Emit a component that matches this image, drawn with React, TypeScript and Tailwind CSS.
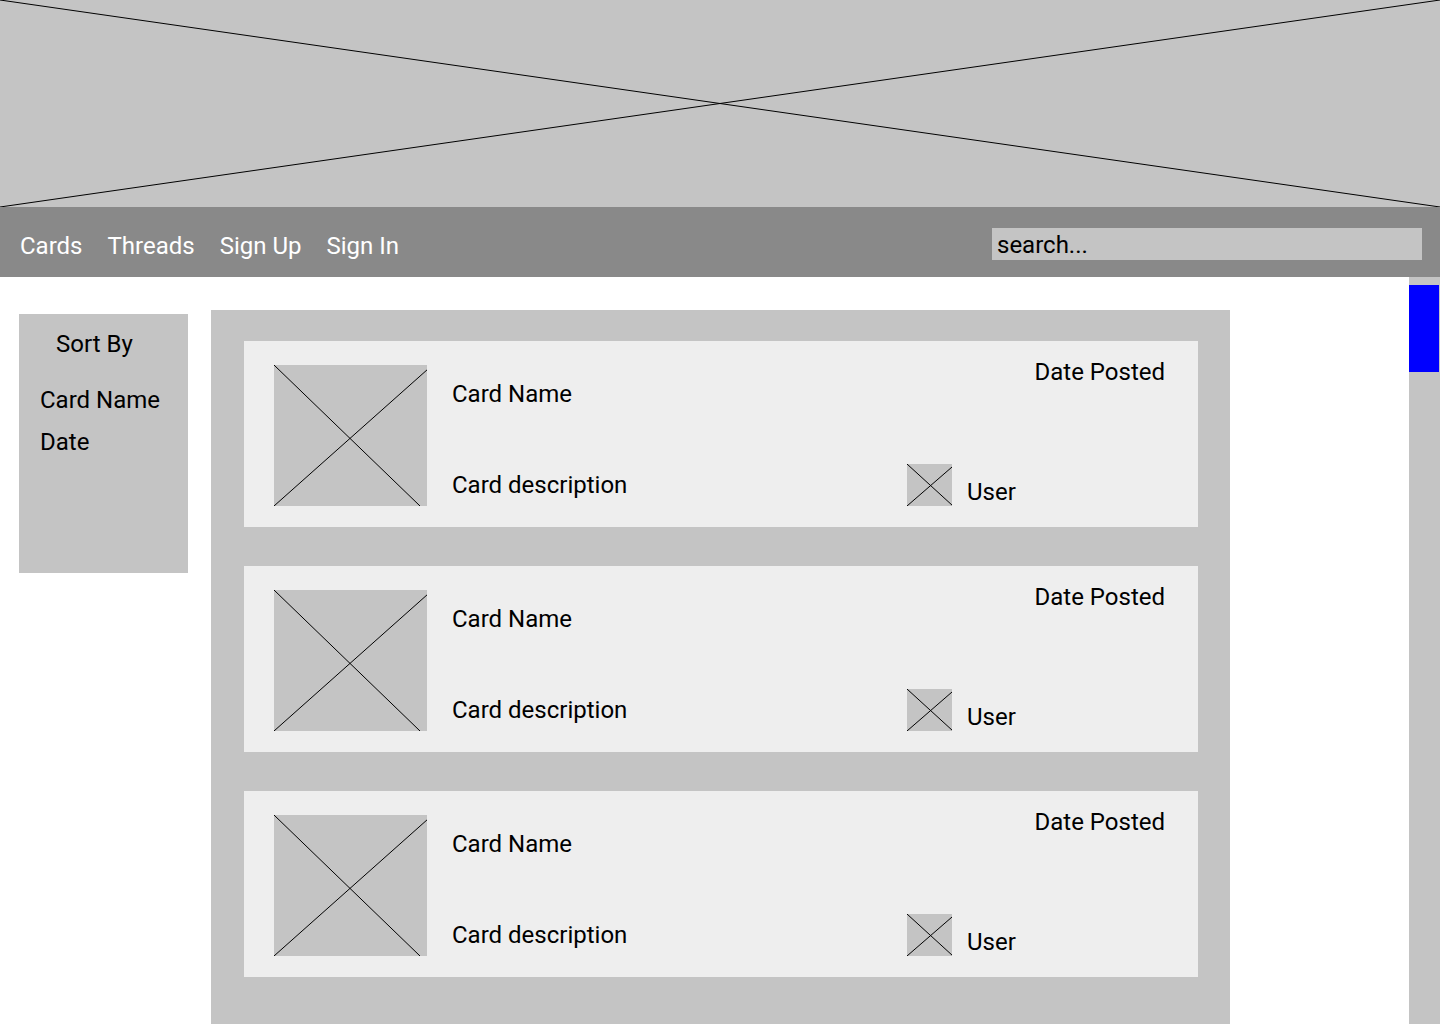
import React from "react";

const font = { fontFamily: "Roboto, 'Noto Sans', sans-serif" };

function Placeholder({ w, h, lines }: { w: number; h: number; lines: [number, number, number, number][] }) {
  return (
    <svg width={w} height={h} viewBox={`0 0 ${w} ${h}`} className="block shrink-0 bg-[#c4c4c4]">
      {lines.map((l, i) => (
        <line key={i} x1={l[0]} y1={l[1]} x2={l[2]} y2={l[3]} stroke="#000" strokeWidth="1" />
      ))}
    </svg>
  );
}

function Card() {
  return (
    <div className="flex h-[186px] w-[954px] shrink-0 items-start bg-[#eeeeee] pl-[30px] pr-[33px]">
      <div className="mt-[24px]">
        <Placeholder w={153} h={141} lines={[[0, 0, 146, 141], [0, 141, 154, 4]]} />
      </div>
      <div className="ml-[25px] mt-[39px] flex flex-1 flex-col">
        <div className="text-[24px] leading-[28px] text-black">Card Name</div>
        <div className="mt-[63px] text-[24px] leading-[28px] text-black">Card description</div>
      </div>
      <div className="mt-[17px] flex w-[258px] flex-col">
        <div className="text-right text-[24px] leading-[28px] text-black">Date Posted</div>
        <div className="mt-[78px] flex items-end gap-[15px]">
          <Placeholder w={45} h={42} lines={[[0, 0, 46, 42], [0, 42, 45, 3]]} />
          <div className="text-[24px] leading-[28px] text-black">User</div>
        </div>
      </div>
    </div>
  );
}

export default function App() {
  return (
    <div className="h-[1024px] w-[1440px] overflow-hidden bg-white" style={font}>
      <header className="h-[207px] w-full bg-[#c4c4c4]">
        <svg width="1440" height="207" viewBox="0 0 1440 207" preserveAspectRatio="none" className="block">
          <line x1="0" y1="0" x2="1440" y2="207" stroke="#000" strokeWidth="1" />
          <line x1="0" y1="207" x2="1440" y2="0" stroke="#000" strokeWidth="1" />
        </svg>
      </header>
      <nav className="flex h-[70px] items-start bg-[#898989] pl-[20px] pr-[18px]">
        <div className="mt-[25px] flex gap-[25px] text-[24px] leading-[28px] text-white">
          <span>Cards</span>
          <span>Threads</span>
          <span>Sign Up</span>
          <span>Sign In</span>
        </div>
        <div className="ml-auto mt-[21px] h-[32px] w-[430px] bg-[#c4c4c4] pl-[5px] pt-[3px] text-[24px] leading-[28px] text-black">
          search...
        </div>
      </nav>
      <div className="flex h-[747px]">
        <aside className="ml-[19px] mt-[37px] h-[259px] w-[169px] shrink-0 bg-[#c4c4c4] pt-[16px] text-[24px] leading-[28px] text-black">
          <div className="pl-[37px]">Sort By</div>
          <div className="mt-[28px] pl-[21px]">Card Name</div>
          <div className="mt-[14px] pl-[21px]">Date</div>
        </aside>
        <main className="ml-[23px] mt-[33px] flex w-[1019px] shrink-0 flex-col gap-[39px] bg-[#c4c4c4] pl-[33px] pt-[31px]">
          <Card />
          <Card />
          <Card />
        </main>
        <div className="ml-auto w-[31px] shrink-0 bg-[#c4c4c4] pt-[8px]">
          <div className="h-[87px] w-[30px] bg-[#0000ff]" />
        </div>
      </div>
    </div>
  );
}
